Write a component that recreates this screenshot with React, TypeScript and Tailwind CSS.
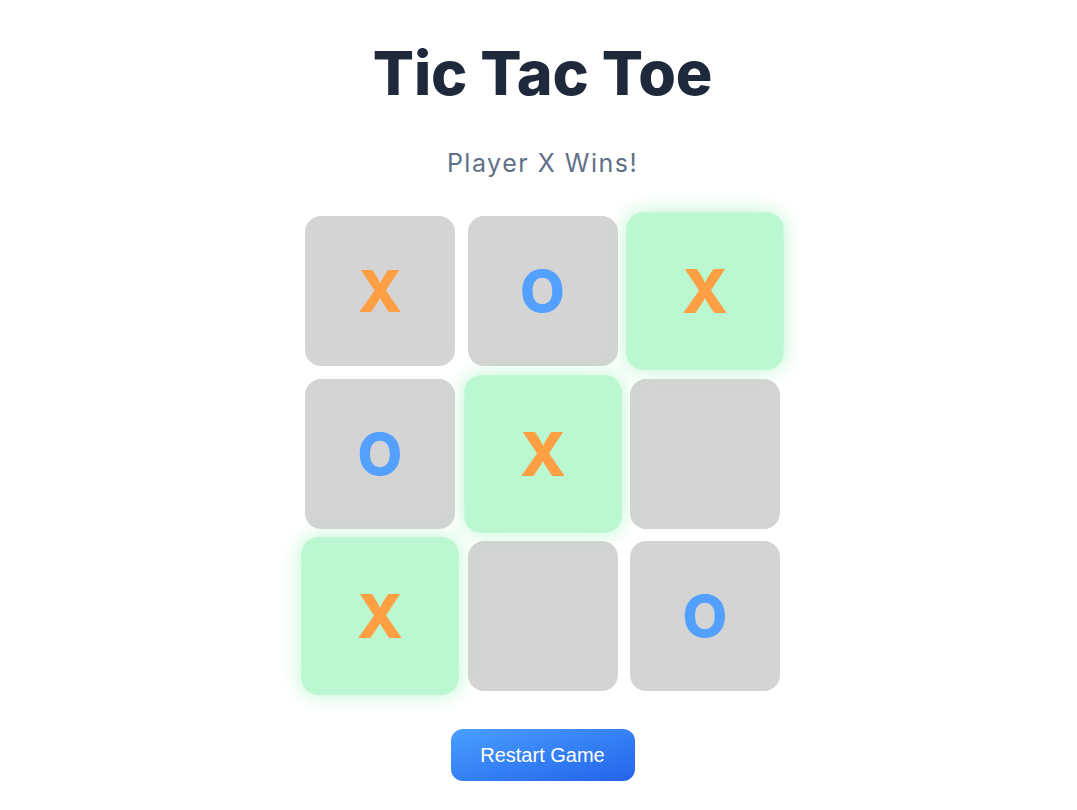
import React from "react";

type Cell = "X" | "O" | null;

const board: Cell[] = ["X", "O", "X", "O", "X", null, "X", null, "O"];
const winning = [2, 4, 6];

export default function App() {
  return (
    <div className="min-h-screen w-full bg-white flex flex-col items-center pl-2" style={{ fontFamily: "Inter, 'Noto Sans', sans-serif" }}>
      <h1 className="mt-[30px] h-[86px] leading-[86px] text-[61px] font-extrabold tracking-[-0.2px] text-[#1e293b]">
        Tic Tac Toe
      </h1>
      <p className="mt-[29px] h-[36px] leading-[36px] text-[25px] font-normal tracking-[1.5px] text-[#5f7088]">
        Player X Wins!
      </p>
      <div className="mt-[35px] grid grid-cols-[150px_150px_150px] grid-rows-[150px_150px_150px] gap-[12.5px]">
        {board.map((c, i) => {
          const win = winning.includes(i);
          return (
            <div
              key={i}
              className={
                win
                  ? "rounded-2xl bg-[#bbf7d0] scale-105 shadow-[0_0_18px_rgba(134,239,172,0.55)] flex items-center justify-center"
                  : "rounded-2xl bg-[#d4d4d4] flex items-center justify-center"
              }
            >
              {c && (
                <span
                  className={
                    "text-[58px] font-extrabold leading-none " +
                    (c === "X" ? "text-[#ff9f43]" : "text-[#54a0ff]")
                  }
                >
                  {c}
                </span>
              )}
            </div>
          );
        })}
      </div>
      <button
        className="mt-[38px] w-[184px] h-[52px] rounded-xl bg-gradient-to-br from-[#4a9eff] to-[#2563eb] text-white text-[20px]"
        style={{ fontFamily: "'Liberation Sans', Arial, sans-serif" }}
      >
        Restart Game
      </button>
    </div>
  );
}
